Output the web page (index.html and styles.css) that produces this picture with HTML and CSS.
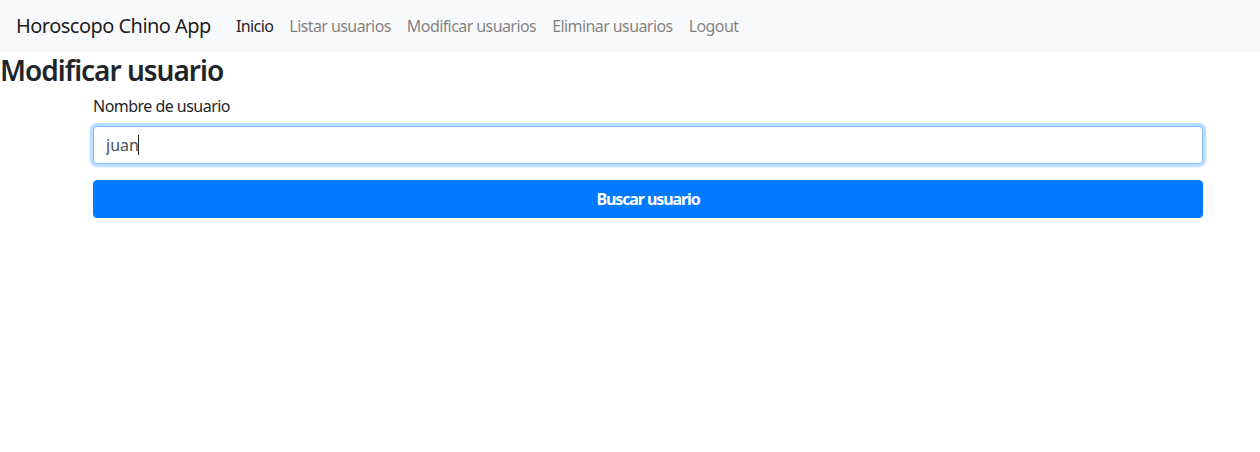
FILE: index.html
```html
<!DOCTYPE html>
<html lang="es">
<head>
<meta charset="utf-8">
<title>Horoscopo Chino App</title>
<link rel="stylesheet" href="styles.css">
</head>
<body>
<nav class="navbar">
  <a class="brand" href="#">Horoscopo Chino App</a>
  <ul class="nav">
    <li><a class="nav-link active" href="#">Inicio</a></li>
    <li><a class="nav-link" href="#">Listar usuarios</a></li>
    <li><a class="nav-link" href="#">Modificar usuarios</a></li>
    <li><a class="nav-link" href="#">Eliminar usuarios</a></li>
    <li><a class="nav-link" href="#">Logout</a></li>
  </ul>
</nav>
<main class="page">
  <h2 class="title">Modificar usuario</h2>
  <form class="form">
    <div class="form-group">
      <label class="label" for="usuario">Nombre de usuario</label>
      <div class="field">
        <input class="input is-focused" id="usuario" type="text" value="juan">
        <span class="caret"></span>
      </div>
    </div>
    <button class="btn" type="button">Buscar usuario</button>
  </form>
</main>
</body>
</html>
```
FILE: styles.css
```css
* { box-sizing: border-box; }
html, body { margin: 0; padding: 0; }
body {
  font-family: "Noto Sans", "Open Sans", sans-serif;
  font-size: 16px;
  line-height: 1.5;
  color: #212529;
  background: #fff;
}
.navbar {
  display: flex;
  align-items: center;
  height: 52px;
  padding: 0 16px;
  background: #f8f9fa;
}
.brand {
  font-size: 20px;
  line-height: 30px;
  letter-spacing: -0.53px;
  color: rgba(0,0,0,.9);
  text-decoration: none;
  margin-right: 17px;
}
.nav {
  display: flex;
  list-style: none;
  margin: 0;
  padding: 0;
}
.nav-link {
  display: block;
  padding: 8px;
  letter-spacing: -0.58px;
  color: rgba(0,0,0,.5);
  text-decoration: none;
}
.nav-link.active { color: rgba(0,0,0,.9); }
.title {
  margin: 0 0 6px;
  padding-top: 2px;
  font-size: 28px;
  font-weight: 600;
  line-height: 1.2;
  letter-spacing: -1px;
}
.form {
  margin-left: 93px;
  width: 1110px;
}
.form-group { margin-bottom: 16px; }
.label {
  display: block;
  margin-bottom: 8px;
  letter-spacing: -0.53px;
}
.field { position: relative; }
.input {
  display: block;
  width: 100%;
  height: 38px;
  padding: 6px 12px;
  font: inherit;
  color: #495057;
  background: #fff;
  border: 1px solid #ced4da;
  border-radius: 4px;
  outline: none;
}
.input.is-focused {
  border-color: #80bdff;
  box-shadow: 0 0 0 3.2px rgba(0,123,255,.25);
}
.caret {
  position: absolute;
  left: 45px;
  top: 9px;
  width: 1px;
  height: 20px;
  background: #212529;
}
.btn {
  display: block;
  width: 100%;
  height: 38px;
  padding: 6px 12px;
  font: inherit;
  font-weight: 700;
  letter-spacing: -1.1px;
  color: #fff;
  background: #007bff;
  border: 1px solid #007bff;
  border-radius: 4px;
}
```
